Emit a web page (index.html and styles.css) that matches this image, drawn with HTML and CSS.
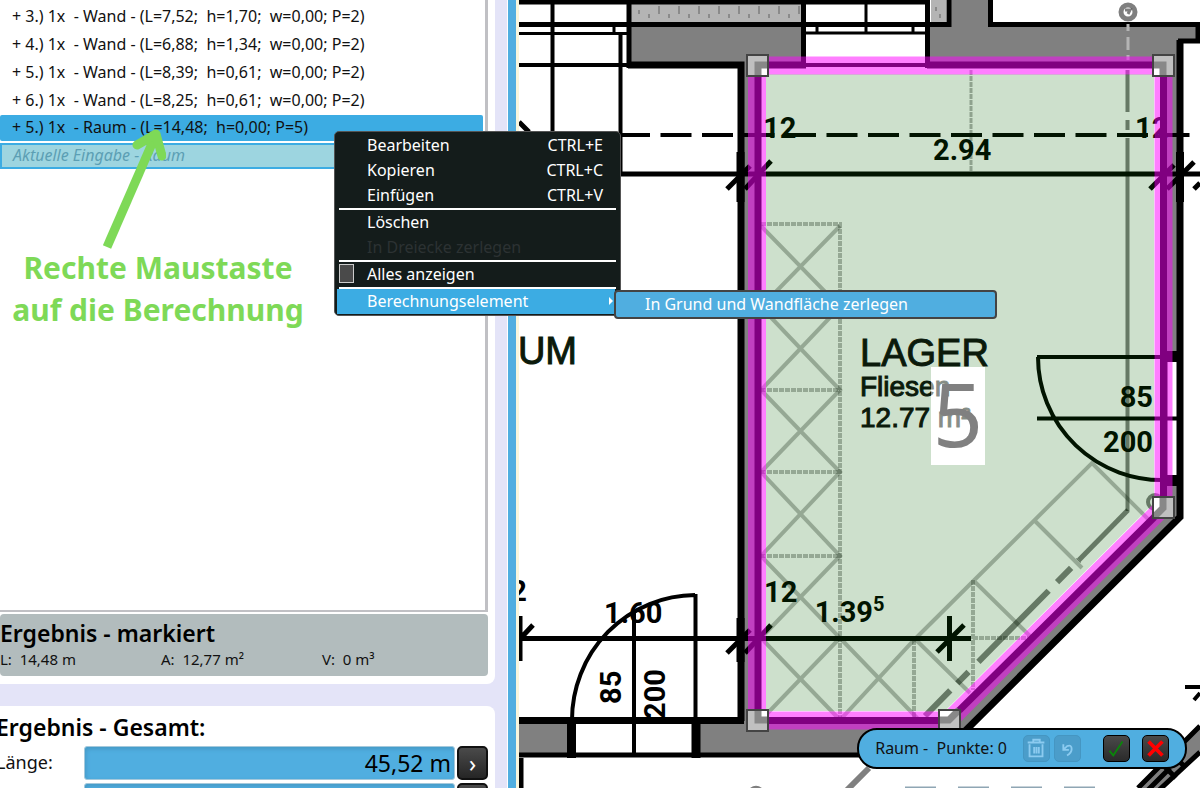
FILE: index.html
```html
<!DOCTYPE html>
<html lang="de">
<head>
    <meta charset="UTF-8">
    <meta name="viewport" content="width=device-width, initial-scale=1.0">
    <title>Berechnung</title>
    <link rel="stylesheet" href="styles.css">
</head>
<body>
<div class="app">
    <aside class="sidebar">
        <section class="card card-list">
            <ul class="rows">
                <li class="row">+ 3.) 1x  - Wand - (L=7,52;  h=1,70;  w=0,00; P=2)</li>
                <li class="row">+ 4.) 1x  - Wand - (L=6,88;  h=1,34;  w=0,00; P=2)</li>
                <li class="row">+ 5.) 1x  - Wand - (L=8,39;  h=0,61;  w=0,00; P=2)</li>
                <li class="row">+ 6.) 1x  - Wand - (L=8,25;  h=0,61;  w=0,00; P=2)</li>
                <li class="row selected">+ 5.) 1x  - Raum - (L=14,48;  h=0,00; P=5)</li>
                <li class="row current">Aktuelle Eingabe - Raum</li>
            </ul>
            <div class="marked">
                <h2>Ergebnis - markiert</h2>
                <div class="marked-values">
                    <span>L:  14,48 m</span>
                    <span>A:  12,77 m²</span>
                    <span>V:  0 m³</span>
                </div>
            </div>
        </section>

        <section class="card card-total">
            <h2>Ergebnis - Gesamt:</h2>
            <div class="total-row">
                <label for="laenge">Länge:</label>
                <input type="text" id="laenge" value="45,52 m" readonly>
                <button class="btn-more" aria-label="Länge Details">›</button>
            </div>
            <div class="total-row">
                <label for="flaeche">Fläche:</label>
                <input type="text" id="flaeche" readonly>
                <button class="btn-more" aria-label="Fläche Details">›</button>
            </div>
        </section>
    </aside>

    <div class="splitter"></div>

    <main class="plan">
        <svg class="plan-svg" viewBox="519 0 681 788" preserveAspectRatio="xMinYMin slice">
            <!-- walls -->
            <g fill="#808080">
                <path d="M629 25H804V65H744V720H758V65H629Z"/>
                <path d="M928 25H950V0H990V25H1198V41H1180V65H928Z"/>
                <path d="M1164 62H1180V517L968 728L940 756H697V720H949L1164 508Z"/>
                <path d="M519 721H571V755H519Z"/>
            </g>
            <path fill="#b4b4b4" d="M631 4H802V22H631ZM931 0H946V22H931Z"/>
            <path stroke="#8a8a8a" stroke-width="4" stroke-dasharray="2 18" d="M638 12H800M648 16H800M658 8H800M935 9H945M939 16H945"/>
            <path fill="#fff" d="M1168 362H1177V475H1168Z"/>

            <g fill="none" stroke="#000">
                <path stroke-width="5" d="M519 2H928M519 24.500H951M989 24.500H1200M629 0V68M803.500 0V65M927.500 0V68M949 0V27M990.500 0V27M1198 25V43M1178 41H1200"/>
                <path stroke-width="3" d="M519 33.500H628M805 33H926M614 26V34M817 26V34M866 0V33M913 26V34"/>
                <path stroke-width="4" d="M519 65H630M804 65H928M552.500 0V174M620.500 33V174"/>
                <path stroke-width="7" d="M628 65H741V721M758 721V65H806M927 65H1163.500V508L949 720.500H758M519 720.500H744"/>
                <path stroke-width="7" d="M1180 40V517L941 755"/>
                <path stroke-width="5" d="M519 755H945"/>
                <path stroke-width="9" d="M571.500 717V758M696 717V758"/>
                <path stroke-width="4" d="M634 610V757M695.500 594V720M572 720A124 125 0 0 1 695 595"/>
                <path stroke-width="5" d="M519 638.500H971M521 758V788M519 174H1200"/>
                <path stroke-width="4" stroke-dasharray="31 10.500" d="M619 135H1200"/>
                <path stroke-width="4" d="M1037 357H1182M1037 418.500H1182M1038 357A124 123 0 0 0 1166 480H1180"/>
                <path stroke-width="11" d="M1165 356.500H1183M1165 480.500H1183"/>
                <!-- dimension ticks -->
                <path stroke-width="5" d="M727 189L750 166M745 189L771 161M1150 189L1174 165M1167 189L1194 162M727 653L750 630M745 653L771 625M937 652L964 625M949.500 616V661M520 616V661M519 640L533 625M519 122L529 132M1194 189L1200 183"/>
                <path stroke-width="8" d="M740.500 152V202M740.500 618V662M1180 152V202"/>
                <path stroke-width="4" d="M1185 687H1200M1194 700L1200 693"/>
            </g>

            <!-- sloped wall at the lower right -->
            <path fill="#808080" d="M1138 788L1200 726V751L1163 788Z"/>
            <path fill="none" stroke="#000" stroke-width="5" d="M1138 788L1200 726M1148 790L1170 768M1157 792L1200 752M1160 762L1176 778M1174 756L1184 766"/>
            <path fill="none" stroke="#808080" stroke-width="6" d="M847 790L869 768M750 792Q756 786 762 792"/>
            <path stroke="#8fa6b4" stroke-width="2" stroke-dasharray="31 22" d="M905 787.500H1096"/>

            <!-- furniture -->
            <g fill="none" stroke="#000" stroke-opacity=".27" stroke-width="4">
                <path stroke-dasharray="5 1" d="M761 224H840V720M761 307H840M761 390H840M761 472H840M761 556H840M914 640V720M973 580V690M973 638H1028" stroke-width="4"/>
                <path d="M761 226L840 307L761 390L840 472L761 556L840 638L761 720M840 226L761 307L840 390L761 472L840 556L761 638L840 720L914 640L1092 463L1152 523M840 638L919 720M914 638L970 693M973 580L1032 638M1034 520L1082 568"/>
            </g>
            <g fill="none" stroke="#000" stroke-opacity=".5">
                <path stroke-width="6" stroke-dasharray="36 10 16 14 100 12 20 10" d="M925 716L1079 560"/>
                <path stroke-width="5" d="M1079 560L1128 510"/>
                <path stroke-width="4" stroke-dasharray="42 8 10 8 400" d="M1127.500 70V511"/>
                <path stroke-width="3" stroke-dasharray="5 1" stroke-opacity=".3" d="M971 70V172"/>
                <circle cx="1128" cy="12" r="7" stroke-width="5"/>
                <path stroke-width="3" d="M1125 10L1130 10L1128 14"/>
                <circle cx="1155" cy="502" r="7" stroke-width="4"/>
            </g>
            <path stroke="#b4b4b4" stroke-width="3" stroke-dasharray="7 6 13 5" d="M1128 24V60"/>

            <g class="dim">
                <text x="763" y="138">12</text>
                <text x="1135" y="138">12</text>
                <text x="933" y="160">2.94</text>
                <text x="764" y="602">12</text>
                <text x="873" y="622" text-anchor="end">1.39</text>
                <text x="873" y="611" class="dim-sup">5</text>
                <text x="604" y="623">1.60</text>
                <text x="527" y="601" text-anchor="end">2</text>
                <text x="1153" y="407" text-anchor="end">85</text>
                <text x="1153" y="452" text-anchor="end">200</text>
                <text transform="translate(621 704) rotate(-90)">85</text>
                <text transform="translate(665 719) rotate(-90)">200</text>
            </g>

            <!-- measured room -->
            <path fill="#056400" fill-opacity=".2" d="M766 74H1154V503L945 711H766Z"/>
            <path fill="none" stroke="#f0f" stroke-opacity=".5" stroke-width="18" d="M757 65.500H1163.500V507L949 720.500H757Z"/>

            <path fill="#fff" d="M931 367H985V465H931Z"/>
            <g class="room-label">
                <text x="860" y="366" class="room-name">LAGER</text>
                <text x="860" y="396">Fliesen</text>
                <text x="860" y="427">12.77 m²</text>
                <text x="577" y="364" class="room-name" text-anchor="end">UM</text>
            </g>
            <path fill="#fff" fill-opacity=".5" d="M931 367H985V465H931Z"/>
            <text x="958" y="447" class="room-number" text-anchor="middle">5</text>

            <!-- corner handles -->
            <path fill="#c0c0c0" d="M747 55H768V76H747ZM1153 55H1174V76H1153ZM1153 497H1174V518H1153ZM747 710H768V731H747ZM939 710H960V731H939Z"/>
            <path fill="#fff" d="M758 66H768V76H758ZM1153 66H1163V76H1153ZM1153 497H1163V508L1153 518ZM758 710H768V720H758ZM939 710H958L949 720H939Z"/>
            <path fill="none" stroke="#888" stroke-width="7" d="M758 76V65H768M1153 65H1163V76M1163 497V508L1154 517M758 710V720H768M939 720H949L959 710"/>
            <path fill="none" stroke="#444" stroke-width="2" d="M747 55H768V76H747ZM1153 55H1174V76H1153ZM1153 497H1174V518H1153ZM747 710H768V731H747ZM939 710H960V731H939Z"/>
        </svg>

        <div class="toolbar">
            <span class="toolbar-text">Raum -  Punkte: 0</span>
            <button class="tool" disabled aria-label="Löschen">
                <svg viewBox="0 0 27 27" fill="none" stroke="#8ccbf0" stroke-width="2"><path d="M10 6V4H17V6M4 7H22M6 9V22H20V9M11 12V19M13.500 12V19M16 12V19"/></svg>
            </button>
            <button class="tool" disabled aria-label="Rückgängig">
                <svg viewBox="0 0 27 27" fill="none" stroke="#8ccbf0" stroke-width="2"><path d="M9 9V15H15M9 15L13 11Q18 9 18 14Q18 18 13 21"/></svg>
            </button>
            <button class="tool tool-ok" aria-label="Übernehmen">
                <svg viewBox="0 0 27 27" fill="none" stroke="#0a850a" stroke-width="2"><path d="M6 16L10 21L20 6"/></svg>
            </button>
            <button class="tool tool-cancel" aria-label="Abbrechen">
                <svg viewBox="0 0 27 27" fill="none" stroke="#f00" stroke-width="4"><path d="M6 6L21 21M21 6L6 21"/></svg>
            </button>
        </div>
    </main>

    <div class="hint">
        <svg class="hint-arrow" viewBox="0 0 70 126" fill="none" stroke="#7ed957">
            <path stroke-width="9" d="M11 122L58 14"/>
            <path stroke-width="9" stroke-linecap="round" stroke-linejoin="round" d="M41 20L60 9L66 31"/>
        </svg>
        <p class="hint-text">Rechte Maustaste<br>auf die Berechnung</p>
    </div>

    <div class="menu">
        <button class="menu-item">Bearbeiten <span>CTRL+E</span></button>
        <button class="menu-item">Kopieren <span>CTRL+C</span></button>
        <button class="menu-item">Einfügen <span>CTRL+V</span></button>
        <hr>
        <button class="menu-item">Löschen</button>
        <button class="menu-item" disabled>In Dreiecke zerlegen</button>
        <hr>
        <label class="menu-item" for="alles"><input type="checkbox" id="alles">Alles anzeigen</label>
        <hr>
        <button class="menu-item active">Berechnungselement <i class="menu-arrow"></i></button>
    </div>
    <button class="submenu">In Grund und Wandfläche zerlegen</button>
</div>
</body>
</html>
```
FILE: styles.css
```css
* {
    box-sizing: border-box;
}

body {
    margin: 0;
    font-family: "Noto Sans", sans-serif;
    font-size: 16px;
    color: #111;
    background-color: #fff;
}

button, input {
    font-family: inherit;
    font-size: inherit;
    margin: 0;
}

h2 {
    margin: 0;
    font-size: 23px;
    line-height: 26px;
    font-weight: 600;
    color: #000;
}

.app {
    position: relative;
    display: flex;
    height: 100vh;
    overflow: hidden;
}

/* left side */
.sidebar {
    display: flex;
    flex-direction: column;
    gap: 22px;
    flex: 0 0 508px;
    padding-right: 12px;
    background-color: #e4e4f8;
    border-right: 1px solid #fff;
    overflow: hidden;
}

.card {
    background-color: #fff;
    padding-right: 7px;
}

.card-list {
    display: flex;
    flex-direction: column;
    gap: 2px;
    height: calc(100vh - 104px);
    flex-shrink: 0;
    padding-bottom: 8px;
    border-radius: 0 0 8px 0;
}

.rows {
    flex: 1;
    display: flex;
    flex-direction: column;
    gap: 2px;
    margin: 0;
    padding: 3px 2px 0 0;
    list-style: none;
    border-right: 3px solid #c0c0c4;
    border-bottom: 2px solid #c0c0c4;
}

.row {
    padding-left: 12px;
    line-height: 26px;
    white-space: pre;
}

.selected {
    line-height: 24px;
    padding-bottom: 2px;
    background-color: #3cace3;
    border-radius: 2px;
}

.current {
    padding-left: 11px;
    padding-bottom: 2px;
    line-height: 20px;
    font-style: italic;
    color: #5c9fb4;
    background-color: #9dd5e0;
    border: 2px solid #3cace3;
}

.marked {
    padding: 6px 0 4px;
    background-color: #b2bcbd;
    border-radius: 4px;
}

.marked-values {
    display: flex;
    font-size: 15px;
    line-height: 26px;
    white-space: pre;
}

.marked-values span {
    width: 161px;
}

.card-total {
    padding-top: 8px;
    border-radius: 0 8px 0 0;
    flex-shrink: 0;
}

.card-total h2 {
    margin-left: -4px;
    margin-bottom: 6px;
}

.total-row {
    display: flex;
    gap: 2px;
    height: 34px;
    margin-bottom: 3px;
}

.total-row label {
    width: 86px;
    margin-left: -4px;
    font-size: 18px;
    line-height: 32px;
}

.total-row input {
    flex: 1;
    min-width: 0;
    padding: 0 3px;
    border: 1px solid #a5c9dc;
    border-radius: 3px;
    background-color: #50aee0;
    box-shadow: inset 1px 2px 4px #4598c4;
    font-size: 23px;
    text-align: right;
    color: #000;
}

.btn-more {
    width: 31px;
    padding: 0;
    border: 2px solid #111;
    border-radius: 5px;
    background: linear-gradient(#4a4a4a, #262626);
    color: #fff;
    font-size: 23px;
    line-height: 24px;
}

.splitter {
    flex: 0 0 11px;
    background-color: #50aee0;
    border-right: 3px solid #f8f6dc;
}

/* floor plan */
.plan {
    position: relative;
    flex: 1;
    min-width: 0;
    overflow: hidden;
}

.plan-svg {
    display: block;
    width: 100%;
    height: 100%;
}

.room-label {
    font-family: "Liberation Sans", Arial, sans-serif;
    font-size: 28px;
    fill: #0b1a0b;
    stroke: #0b1a0b;
}

.room-name {
    font-size: 38px;
}

.dim {
    font-family: Roboto, sans-serif;
    font-size: 29px;
    font-weight: bold;
}

.dim-sup {
    font-size: 20px;
}

.room-number {
    font-family: "Noto Sans", sans-serif;
    font-size: 88px;
    fill: #808080;
}

.toolbar {
    position: absolute;
    right: 13px;
    bottom: 19px;
    display: flex;
    align-items: center;
    gap: 4px;
    height: 41px;
    padding: 0 16px;
    border: 2px solid #000;
    border-radius: 20px;
    background-color: #50aee0;
}

.toolbar-text {
    margin-right: 12px;
    padding-bottom: 2px;
    white-space: pre;
}

.tool {
    width: 27px;
    height: 27px;
    padding: 0;
    border: 1px solid #000;
    border-radius: 5px;
    background: linear-gradient(#4a4a4a, #2a2a2a);
}

.tool svg {
    display: block;
    width: 25px;
    height: 25px;
}

.tool:disabled {
    border-color: #4596c2;
    background: #4b9dca;
}

.tool-ok {
    margin-left: 18px;
}

.tool-cancel {
    margin-left: 8px;
}

/* note over the list */
.hint {
    position: absolute;
    left: 12px;
    top: 125px;
    width: 292px;
    text-align: center;
}

.hint-arrow {
    display: block;
    width: 70px;
    height: 126px;
    margin-left: 84px;
}

.hint-text {
    margin: -4px 0 0;
    font-size: 30px;
    line-height: 42px;
    font-weight: bold;
    white-space: nowrap;
    color: #7ed957;
}

/* context menu */
.menu {
    position: absolute;
    left: 334px;
    top: 131px;
    width: 287px;
    padding: 1px 5px 1px 2px;
    border: 1px solid #555;
    border-radius: 5px;
    background-color: #141c1b;
}

.menu hr {
    height: 2px;
    margin: 0 -1px 0 2px;
    border: none;
    background-color: #fff;
}

.menu-item {
    position: relative;
    display: flex;
    justify-content: space-between;
    align-items: center;
    width: 100%;
    height: 25px;
    padding: 0 12px 2px 30px;
    border: none;
    background: none;
    color: #fff;
    text-align: left;
}

label.menu-item {
    justify-content: flex-start;
}

.menu-item:disabled {
    color: #2c3233;
}

.menu-item input {
    position: absolute;
    left: 2px;
    width: 15px;
    height: 19px;
    appearance: none;
    border: 1px solid #ccc;
    background-color: #4a4a4a;
}

.menu .active {
    padding-right: 2px;
    background-color: #3cace3;
}

.menu-arrow {
    border-left: 4px solid #fff;
    border-top: 4px solid transparent;
    border-bottom: 4px solid transparent;
}

.submenu {
    position: absolute;
    left: 614px;
    top: 290px;
    width: 383px;
    height: 29px;
    padding: 0 0 2px 29px;
    border: 2px solid #444;
    border-radius: 4px;
    background-color: #50aee0;
    color: #fff;
    text-align: left;
}
```
